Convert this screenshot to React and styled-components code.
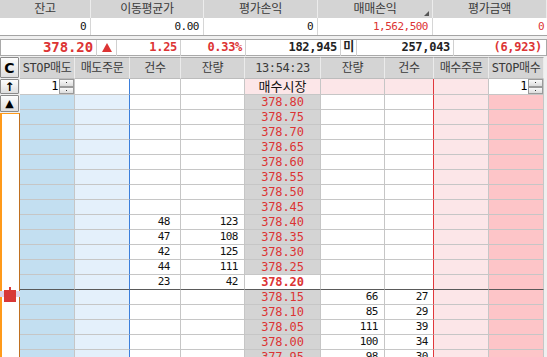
import React from "react";
import styled, { createGlobalStyle } from "styled-components";

const MONO = `"DejaVu Sans Mono", "Noto Sans CJK KR", monospace`;
const KR = `"DejaVu Sans Mono", "Noto Sans CJK KR", sans-serif`;
const RED = "#dc3434";

const Global = createGlobalStyle`
  html, body { margin: 0; padding: 0; background: #f0f0f0; }
  #root { width: 547px; height: 357px; }
`;

const Page = styled.div`
  width: 547px;
  height: 357px;
  background: #f0f0f0;
  overflow: hidden;
  display: flex;
  flex-direction: column;
`;

/* ---------- top summary ---------- */
const Summary = styled.div`
  display: grid;
  grid-template-columns: 91px 113px 114px 115px 114px;
  grid-template-rows: 18px 17px;
  background: #fff;
  border-bottom: 1px solid #a4a4a4;
`;

const SumHead = styled.div`
  position: relative;
  background: #d4d4d4;
  border-right: 1px solid #ececec;
  color: #3a3a3a;
  font-family: ${KR};
  font-size: 12px;
  letter-spacing: -0.3px;
  line-height: 18px;
  text-align: center;
  &:last-child { border-right: none; }
`;

const SortMark = styled.span`
  position: absolute;
  right: 3px;
  bottom: 2px;
  width: 0;
  height: 0;
  border-left: 5px solid transparent;
  border-bottom: 5px solid #555;
`;

const SumVal = styled.div`
  border-right: 1px solid #d6d6d6;
  color: ${(p) => (p.$red ? RED : "#111")};
  font-family: ${MONO};
  font-size: 11px;
  letter-spacing: -0.5px;
  line-height: 17px;
  text-align: right;
  padding-right: 4px;
  &:last-child { border-right: none; padding-right: 3px; }
`;

/* ---------- price bar ---------- */
const PriceBar = styled.div`
  margin-top: 3px;
  height: 17px;
  box-sizing: border-box;
  display: grid;
  grid-template-columns: 96px 20px 64px 65px 95px 16px 97px 1fr;
  background: #fff;
  border: 1px solid #a9a9a9;
`;

const PriceCell = styled.div`
  border-right: 1px solid #d0d0d0;
  color: ${(p) => (p.$red ? RED : "#222")};
  font-family: ${MONO};
  font-weight: bold;
  font-size: ${(p) => (p.$big ? 14 : 12)}px;
  letter-spacing: ${(p) => (p.$big ? "-0.1px" : "-0.3px")};
  line-height: 15px;
  text-align: ${(p) => p.$align || "right"};
  padding-right: ${(p) => (p.$align ? 0 : 3)}px;
  &:last-child { border-right: none; padding-right: 4px; }
`;

const UpTri = styled.span`
  display: inline-block;
  width: 0;
  height: 0;
  margin-top: 3px;
  border-left: 5px solid transparent;
  border-right: 5px solid transparent;
  border-bottom: 9px solid ${RED};
`;

/* ---------- order book ---------- */
const Book = styled.div`
  margin-top: 1px;
  flex: 1;
  display: flex;
  min-height: 0;
`;

const Controls = styled.div`
  width: 20px;
  display: flex;
  flex-direction: column;
  gap: 1px;
`;

const CtlButton = styled.div`
  height: ${(p) => p.$h}px;
  box-sizing: border-box;
  border: 1px solid #8a8a8a;
  border-radius: 1px;
  background: linear-gradient(#fdfdfd, #dedede);
  display: flex;
  align-items: center;
  justify-content: center;
  font-family: "DejaVu Sans", sans-serif;
  font-weight: bold;
  font-size: ${(p) => p.$fs || 12}px;
  color: #000;
  margin-right: 1px;
`;

const Track = styled.div`
  position: relative;
  flex: 1;
  background: #fff;
  border-top: 1px solid #ff9a1a;
  border-left: 2px solid #ff9a1a;
  border-right: 1px solid #c07020;
`;

const MarkerBand = styled.div`
  position: absolute;
  left: -2px;
  right: -1px;
  top: 177px;
  height: 6px;
  background: #dcd3ea;
`;

const Marker = styled.svg`
  position: absolute;
  left: 2px;
  top: 173px;
`;

const Grid = styled.div`
  display: flex;
  flex-direction: column;
`;

const Row = styled.div`
  display: grid;
  grid-template-columns: 55px 55px 51px 64px 76px 64px 49px 55px 55px;
  height: ${(p) => p.$h}px;
`;

const HeadCell = styled.div`
  box-sizing: border-box;
  background: #d4d4d4;
  border-top: 1px solid #a8a8a8;
  border-bottom: 1px solid #bcbcbc;
  border-right: 1px solid #ebebeb;
  color: #3a3a3a;
  font-family: ${KR};
  font-size: 12px;
  letter-spacing: -0.4px;
  line-height: 20px;
  text-align: center;
  white-space: nowrap;
  overflow: hidden;
`;

const Cell = styled.div`
  box-sizing: border-box;
  position: relative;
  background: ${(p) => p.$bg || "#fff"};
  border-right: 1px solid ${(p) => p.$rc || "#c6c6c6"};
  border-bottom: 1px solid ${(p) => (p.$dark ? "#5a5a5a" : "#c6c6c6")};
  color: #111;
  font-family: ${MONO};
  font-size: 11px;
  letter-spacing: -0.5px;
  line-height: 14px;
  text-align: right;
  padding-right: ${(p) => p.$pad || 0}px;
  white-space: nowrap;
`;

const PriceText = styled(Cell)`
  text-align: center;
  padding-right: 0;
  color: ${(p) => (p.$market ? "#111" : RED)};
  font-family: ${(p) => (p.$market ? `"Noto Sans CJK KR", sans-serif` : MONO)};
  font-size: ${(p) => (p.$market ? 13 : 12)}px;
  font-weight: ${(p) => (p.$cur ? "bold" : "normal")};
  letter-spacing: ${(p) => (p.$market ? "0px" : "-0.1px")};
`;

const SpinBox = styled.div`
  display: flex;
  height: 100%;
  background: #fff;
`;

const SpinInput = styled.div`
  flex: 1;
  text-align: right;
  font-family: ${MONO};
  font-size: 12px;
  line-height: 15px;
  padding-right: 1px;
  color: #000;
`;

const SpinBtns = styled.div`
  width: 15px;
  display: flex;
  flex-direction: column;
`;

const SpinBtn = styled.div`
  flex: 1;
  box-sizing: border-box;
  border: 1px solid #9a9a9a;
  background: linear-gradient(#fafafa, #dcdcdc);
  display: flex;
  align-items: center;
  justify-content: center;
  &::after {
    content: "";
    width: 1px;
    height: 1px;
    background: #333;
  }
`;

const Spinner = ({ value }) => (
  <SpinBox>
    <SpinInput>{value}</SpinInput>
    <SpinBtns>
      <SpinBtn />
      <SpinBtn />
    </SpinBtns>
  </SpinBox>
);

const C = {
  stopSell: "#c3dff1",
  sellOrder: "#e4f0fb",
  price: "#d4d4d4",
  buyOrder: "#fce6e8",
  stopBuy: "#fdc5c8",
  blue: "#3b7fdc",
  red: "#e0383c",
};

const asks = [
  ["378.80"], ["378.75"], ["378.70"], ["378.65"], ["378.60"], ["378.55"],
  ["378.50"], ["378.45"], ["378.40", 48, 123], ["378.35", 47, 108],
  ["378.30", 42, 125], ["378.25", 44, 111],
];
const bids = [
  ["378.15", 66, 27], ["378.10", 85, 29], ["378.05", 111, 39],
  ["378.00", 100, 34], ["377.95", 98, 30],
];

const summaryHeads = ["잔고", "이동평균가", "평가손익", "매매손익", "평가금액"];
const bookHeads = ["STOP매도", "매도주문", "건수", "잔량", "13:54:23", "잔량", "건수", "매수주문", "STOP매수"];

export default function App() {
  return (
    <>
      <Global />
      <Page>
        <Summary>
          {summaryHeads.map((h, i) => (
            <SumHead key={h}>
              {h}
              {i === 3 && <SortMark />}
            </SumHead>
          ))}
          <SumVal>0</SumVal>
          <SumVal>0.00</SumVal>
          <SumVal>0</SumVal>
          <SumVal $red>1,562,500</SumVal>
          <SumVal $red>0</SumVal>
        </Summary>

        <PriceBar>
          <PriceCell $red $big>378.20</PriceCell>
          <PriceCell $align="center"><UpTri /></PriceCell>
          <PriceCell $red>1.25</PriceCell>
          <PriceCell $red>0.33%</PriceCell>
          <PriceCell>182,945</PriceCell>
          <PriceCell $align="center">미</PriceCell>
          <PriceCell>257,043</PriceCell>
          <PriceCell $red>(6,923)</PriceCell>
        </PriceBar>

        <Book>
          <Controls>
            <CtlButton $h={21} $fs={14}>C</CtlButton>
            <CtlButton $h={15} $fs={12}>↑</CtlButton>
            <CtlButton $h={17} $fs={11}>▲</CtlButton>
            <Track>
              <MarkerBand />
              <Marker width="13" height="16" viewBox="0 0 13 16">
                <rect x="5" y="0" width="2" height="4" fill="#d83838" />
                <rect x="0" y="3" width="12" height="12" fill="#d83838" />
              </Marker>
            </Track>
          </Controls>

          <Grid>
            <Row $h={22}>
              {bookHeads.map((h, i) => (
                <HeadCell key={i}>{h}</HeadCell>
              ))}
            </Row>

            <Row $h={16}>
              <Cell><Spinner value="1" /></Cell>
              <Cell $rc={C.blue} />
              <Cell />
              <Cell />
              <PriceText $bg={C.buyOrder} $market>매수시장</PriceText>
              <Cell $bg={C.buyOrder} />
              <Cell $bg={C.buyOrder} $rc={C.red} />
              <Cell $bg={C.buyOrder} />
              <Cell><Spinner value="1" /></Cell>
            </Row>

            {asks.map(([p, cnt, qty]) => (
              <Row $h={15} key={p}>
                <Cell $bg={C.stopSell} />
                <Cell $bg={C.sellOrder} $rc={C.blue} />
                <Cell $pad={10}>{cnt}</Cell>
                <Cell $pad={6}>{qty}</Cell>
                <PriceText $bg={C.price}>{p}</PriceText>
                <Cell />
                <Cell $rc={C.red} />
                <Cell $bg={C.buyOrder} />
                <Cell $bg={C.stopBuy} />
              </Row>
            ))}

            <Row $h={15}>
              <Cell $bg={C.stopSell} $dark />
              <Cell $bg={C.sellOrder} $rc={C.blue} $dark />
              <Cell $pad={10} $dark>23</Cell>
              <Cell $pad={6} $dark>42</Cell>
              <PriceText $cur $dark>378.20</PriceText>
              <Cell $dark />
              <Cell $rc={C.red} $dark />
              <Cell $bg={C.buyOrder} $dark />
              <Cell $bg={C.stopBuy} $dark />
            </Row>

            {bids.map(([p, qty, cnt]) => (
              <Row $h={15} key={p}>
                <Cell $bg={C.stopSell} />
                <Cell $bg={C.sellOrder} $rc={C.blue} />
                <Cell />
                <Cell />
                <PriceText $bg={C.price}>{p}</PriceText>
                <Cell $pad={6}>{qty}</Cell>
                <Cell $rc={C.red} $pad={5}>{cnt}</Cell>
                <Cell $bg={C.buyOrder} />
                <Cell $bg={C.stopBuy} />
              </Row>
            ))}
          </Grid>
        </Book>
      </Page>
    </>
  );
}
